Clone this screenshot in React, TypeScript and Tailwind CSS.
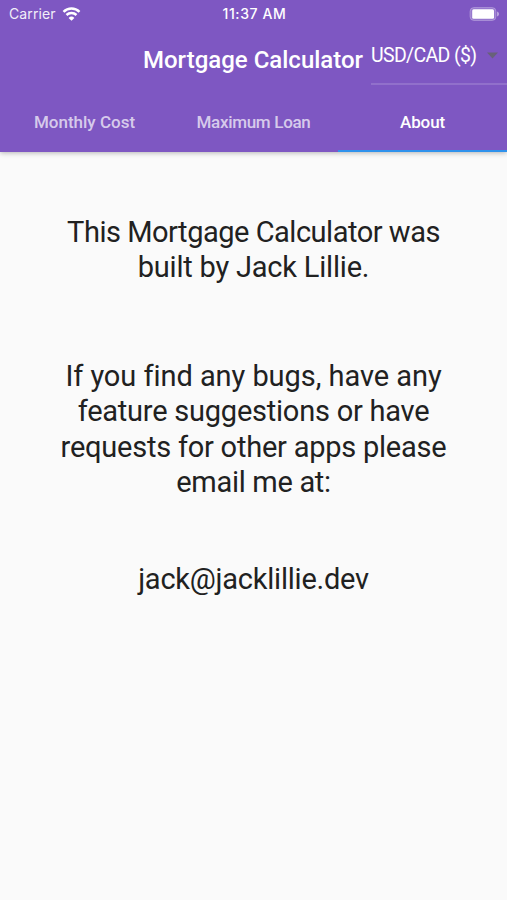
import React from 'react';

const tabs = [
  { label: 'Monthly Cost', active: false, tracking: 'tracking-normal' },
  { label: 'Maximum Loan', active: false, tracking: 'tracking-[-0.3px]' },
  { label: 'About', active: true, tracking: 'tracking-[-0.1px]' },
];

const StatusBar: React.FC = () => (
  <div className="grid h-7 grid-cols-3 items-center pl-[9px] pr-[7px] font-['Inter',sans-serif] text-[14px] leading-7">
    <div className="flex items-center gap-[6px]">
      <span className="tracking-[0.1px] opacity-90">Carrier</span>
      <svg className="-mt-px" width="19" height="14" viewBox="0 0 18 14" fill="none" stroke="white" strokeWidth="2.5">
        <path d="M1 4.8a11.6 11.6 0 0 1 16 0" />
        <path d="M4 8a7.3 7.3 0 0 1 10 0" />
        <path d="M9 13.8 6.1 10.9a4.2 4.2 0 0 1 5.8 0z" fill="white" stroke="none" />
      </svg>
    </div>
    <span className="text-center font-medium tracking-[0.6px]">11:37 AM</span>
    <svg className="justify-self-end" width="31" height="14" viewBox="0 0 31 14">
      <rect x="1" y="0.5" width="26" height="13" rx="4" fill="white" fillOpacity="0.2" stroke="white" strokeOpacity="0.25" />
      <rect x="3.2" y="2.3" width="21.8" height="9.4" rx="1.5" fill="white" />
      <path d="M28 4.5c2.8.8 2.8 4.2 0 5z" fill="white" fillOpacity="0.45" />
    </svg>
  </div>
);

const App: React.FC = () => {
  return (
    <div className="flex h-[900px] w-[507px] flex-col overflow-hidden bg-[#fafafa] font-['Roboto',sans-serif]">
      <header className="relative h-[152px] bg-[#7e57c2] text-white shadow-[0_1px_5px_rgba(0,0,0,0.28)]">
        <StatusBar />

        {/* Title and currency picker */}
        <div className="flex h-[64px] items-start pl-[143px]">
          <h1 className="w-[228px] whitespace-nowrap pt-4 text-[24px] font-medium leading-8">Mortgage Calculator</h1>
          <button className="flex h-[57px] flex-1 items-start justify-between border-b-2 border-white/15 pr-[9px] pt-[15px]">
            <span className="whitespace-nowrap text-[19.5px] leading-[26px] tracking-[-0.65px]">USD/CAD ($)</span>
            <svg className="mt-[9px]" width="11" height="7" viewBox="0 0 11 7">
              <path d="M0 0.5h11L5.5 6.5z" fill="#68617a" />
            </svg>
          </button>
        </div>

        {/* Tabs */}
        <nav className="grid h-[60px] grid-cols-3">
          {tabs.map(({ label, active, tracking }) => (
            <button
              key={label}
              className={`border-b-2 pt-[3px] text-[17px] font-medium ${tracking} ${
                active ? 'border-[#2f92ec] text-white' : 'border-transparent text-white/70'
              }`}
            >
              {label}
            </button>
          ))}
        </nav>
      </header>

      <main className="flex flex-col whitespace-nowrap text-center text-[29px] leading-[35.5px] text-[#212121] [font-variant-ligatures:none]">
        <p className="pt-[62.5px] tracking-[-0.2px]">
          <span className="tracking-[-0.48px]">This Mortgage Calculator was</span>
          <br />
          built by Jack Lillie.
        </p>
        <p className="pt-[73px] tracking-[-0.23px]">
          <span className="tracking-[-0.05px]">If you find any bugs, have any</span>
          <br />
          feature suggestions or have
          <br />
          requests for other apps please
          <br />
          <span className="tracking-[-0.3px]">email me at:</span>
        </p>
        <p className="pt-[61px] tracking-[-0.23px]">jack@jacklillie.dev</p>
      </main>
    </div>
  );
};

export default App;
